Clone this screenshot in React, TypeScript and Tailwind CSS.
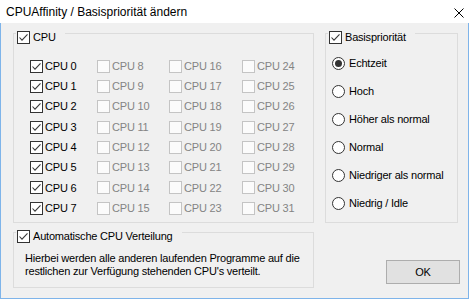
import React from 'react';

const CPU_ROWS = [0, 1, 2, 3, 4, 5, 6, 7];
const CPU_COLS = [0, 8, 16, 24];
const PRIORITIES = ['Echtzeit', 'Hoch', 'Höher als normal', 'Normal', 'Niedriger als normal', 'Niedrig / Idle'];

// Win32 style checkbox, 13x13
const CheckBox: React.FC<{ checked?: boolean; disabled?: boolean }> = ({ checked, disabled }) => (
  <div
    className={`w-[13px] h-[13px] flex-shrink-0 border flex items-center justify-center ${
      disabled ? 'border-[#c4c4c4] bg-[#fbfbfb]' : 'border-[#333333] bg-white'
    }`}
  >
    {checked && (
      <svg width="11" height="11" viewBox="0 0 11 11">
        <polyline points="1.5,5.5 4,8.2 9.5,2.3" fill="none" stroke="#3a3a3a" strokeWidth="1.1" />
      </svg>
    )}
  </div>
);

const Radio: React.FC<{ selected?: boolean }> = ({ selected }) => (
  <div className="w-[13px] h-[13px] flex-shrink-0 rounded-full border border-[#333333] bg-white flex items-center justify-center">
    {selected && <div className="w-[7px] h-[7px] rounded-full bg-[#333333]" />}
  </div>
);

// Group header sits over the top border line
const GroupHeader: React.FC<{ label: string }> = ({ label }) => (
  <div className="absolute left-[2px] -top-[3px] h-[13px] flex items-center gap-[3px] bg-[#f0f0f0] pl-px pr-[9px]">
    <CheckBox checked />
    <span className="leading-[13px]">{label}</span>
  </div>
);

export default function App() {
  return (
    <div className="w-[469px] h-[300px] bg-white text-black text-[11px] tracking-[-0.2px] font-['Liberation_Sans',Arial,sans-serif] overflow-hidden">
      {/* Title bar */}
      <div className="h-[23px] flex items-center justify-between pl-[6px] pr-[5px]">
        <span className="text-[12px] tracking-normal">CPUAffinity / Basispriorität ändern</span>
        <svg width="10" height="10" viewBox="0 0 10 10" className="mt-[3px]">
          <line x1="0.5" y1="0.5" x2="9.5" y2="9.5" stroke="#000" strokeWidth="1" />
          <line x1="9.5" y1="0.5" x2="0.5" y2="9.5" stroke="#000" strokeWidth="1" />
        </svg>
      </div>

      {/* Window body */}
      <div className="h-[276px] bg-[#f0f0f0] border-x border-b border-[#7eb4ea] pt-[10px] pl-[12px] flex gap-[11px]">
        {/* Left column */}
        <div className="w-[301px] flex flex-col gap-[9px]">
          <div className="relative h-[190px] border border-[#dcdcdc] pt-[22px] pl-[16px]">
            <GroupHeader label="CPU" />
            <div className="grid grid-cols-[67px_72px_73px_1fr] auto-rows-[20.3px]">
              {CPU_ROWS.map((r) =>
                CPU_COLS.map((c) => {
                  const n = r + c;
                  const enabled = c === 0;
                  return (
                    <div key={n} className="flex items-center gap-[2px]">
                      <CheckBox checked={enabled} disabled={!enabled} />
                      <span className={enabled ? 'text-black' : 'text-[#848484]'}>CPU {n}</span>
                    </div>
                  );
                })
              )}
            </div>
          </div>

          <div className="relative h-[56px] border border-[#dcdcdc] pt-[19px] pl-[11px]">
            <GroupHeader label="Automatische CPU Verteilung" />
            <p className="leading-[13px]">
              Hierbei werden alle anderen laufenden Programme auf die
              <br />
              restlichen zur Verfügung stehenden CPU's verteilt.
            </p>
          </div>
        </div>

        {/* Right column */}
        <div className="w-[135px] flex flex-col">
          <div className="relative w-[133px] h-[190px] border border-[#dcdcdc] pt-[15px] pl-[6px]">
            <GroupHeader label="Basispriorität" />
            {PRIORITIES.map((p, i) => (
              <div key={p} className="h-[28px] flex items-center gap-[4px]">
                <Radio selected={i === 0} />
                <span>{p}</span>
              </div>
            ))}
          </div>

          <button className="self-end mt-[37px] w-[74px] h-[24px] bg-[#e1e1e1] border border-[#adadad] text-[11px] leading-none">
            OK
          </button>
        </div>
      </div>
    </div>
  );
}
